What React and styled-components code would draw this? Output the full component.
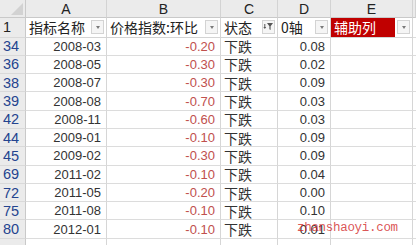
import React from "react";
import styled, { createGlobalStyle, css } from "styled-components";

const Global = createGlobalStyle`
  html, body { margin: 0; padding: 0; background: #fff; }
  body { width: 416px; height: 245px; overflow: hidden; }
`;

const Sheet = styled.div`
  position: relative;
  display: grid;
  grid-template-columns: 26px 81px 114px 57px 53px 82px 1fr;
  grid-auto-rows: 18.3px;
  grid-template-rows: 18px 19.5px;
  width: 416px;
  height: 245px;
  overflow: hidden;
  font-family: "Liberation Sans", "Noto Sans CJK SC", sans-serif;
  background: #fff;
`;

const headerBg = "#ebebeb";

const Corner = styled.div`
  position: relative;
  background: ${headerBg};
  border-right: 1px solid #c9c9c9;
  border-bottom: 1px solid #c9c9c9;
  &::after {
    content: "";
    position: absolute;
    right: 2px;
    bottom: 2px;
    width: 0;
    height: 0;
    border-left: 12px solid transparent;
    border-bottom: 12px solid #d2d2d2;
  }
`;

const ColLetter = styled.div`
  background: ${headerBg};
  border-right: 1px solid #d3d3d3;
  border-bottom: 1px solid #c9c9c9;
  display: flex;
  align-items: center;
  justify-content: center;
  font-size: 14px;
  color: #222;
  box-sizing: border-box;
`;

const RowNum = styled.div`
  background: ${headerBg};
  border-right: 1px solid #c9c9c9;
  border-bottom: 1px solid #d9d9d9;
  display: flex;
  align-items: center;
  padding-left: 3px;
  font-size: 14.5px;
  color: ${(p) => (p.$filtered ? "#24448f" : "#222")};
  box-sizing: border-box;
`;

const HeaderCell = styled.div`
  display: flex;
  align-items: center;
  justify-content: space-between;
  gap: 2px;
  padding: 0 2px 0 3px;
  border-right: 1px solid #d4d4d4;
  border-bottom: 1px solid #d4d4d4;
  font-family: "Noto Sans CJK SC", "Liberation Sans", sans-serif;
  font-size: 14px;
  color: #222;
  white-space: nowrap;
  overflow: hidden;
  box-sizing: border-box;
  ${(p) =>
    p.$accent &&
    css`
      padding-left: 0;
      align-items: stretch;
      & > ${DropButton} {
        align-self: center;
      }
    `}
`;

const AccentLabel = styled.span`
  flex: 1;
  display: flex;
  align-items: center;
  padding-left: 3px;
  background: #c00000;
  color: #fff;
`;

const DropButton = styled.div`
  flex: 0 0 auto;
  width: 13px;
  height: 14px;
  box-sizing: border-box;
  border: 1px solid #d3d3d3;
  background: #f5f5f5;
  display: flex;
  align-items: center;
  justify-content: center;
  &::before {
    content: "";
    width: 0;
    height: 0;
    border-left: 2.5px solid transparent;
    border-right: 2.5px solid transparent;
    border-top: 3px solid #7a7a7a;
  }
`;

const FilterButton = styled.div`
  flex: 0 0 auto;
  width: 13px;
  height: 14px;
  box-sizing: border-box;
  border: 1px solid #d3d3d3;
  background: #f5f5f5;
  display: flex;
  align-items: center;
  justify-content: center;
`;

const Cell = styled.div`
  display: flex;
  align-items: center;
  justify-content: ${(p) => (p.$align === "right" ? "flex-end" : "flex-start")};
  padding: 0 ${(p) => (p.$align === "right" ? "5px" : "3px")};
  border-right: 1px solid #d6d6d6;
  border-bottom: 1px solid #dcdcdc;
  font-size: ${(p) => (p.$cjk ? "14px" : "13px")};
  font-family: ${(p) =>
    p.$cjk
      ? `"Noto Sans CJK SC", "Liberation Sans", sans-serif`
      : `"Liberation Sans", "Noto Sans CJK SC", sans-serif`};
  color: ${(p) => p.$color || "#333"};
  white-space: nowrap;
  box-sizing: border-box;
`;

const Filler = styled.div`
  border-bottom: 1px solid #dcdcdc;
`;

const Watermark = styled.div`
  position: absolute;
  left: 297px;
  top: 221px;
  font-family: "Liberation Mono", monospace;
  font-size: 12.5px;
  color: rgba(210, 40, 40, 0.8);
  letter-spacing: -0.3px;
  pointer-events: none;
`;

const FunnelIcon = () => (
  <svg width="11" height="10" viewBox="0 0 11 10">
    <path d="M4 1 H10 L7.6 4.2 V8 L6.4 7.2 V4.2 Z" fill="#555" />
    <path d="M1.8 2 V6" stroke="#555" strokeWidth="1" />
    <path d="M0.4 5 L1.8 7 L3.2 5 Z" fill="#555" />
  </svg>
);

const rows = [
  ["34", "2008-03", "-0.20", "0.08"],
  ["36", "2008-05", "-0.30", "0.02"],
  ["38", "2008-07", "-0.30", "0.09"],
  ["39", "2008-08", "-0.70", "0.03"],
  ["42", "2008-11", "-0.60", "0.03"],
  ["44", "2009-01", "-0.10", "0.09"],
  ["45", "2009-02", "-0.30", "0.09"],
  ["69", "2011-02", "-0.10", "0.04"],
  ["72", "2011-05", "-0.20", "0.00"],
  ["75", "2011-08", "-0.10", "0.10"],
  ["80", "2012-01", "-0.10", "0.01"],
  ["", "", "", ""],
];

export default function App() {
  return (
    <>
      <Global />
      <Sheet>
        <Corner />
        {["A", "B", "C", "D", "E"].map((l) => (
          <ColLetter key={l}>{l}</ColLetter>
        ))}
        <ColLetter />

        <RowNum>1</RowNum>
        <HeaderCell>
          <span>指标名称</span>
          <DropButton />
        </HeaderCell>
        <HeaderCell>
          <span>价格指数:环比</span>
          <DropButton />
        </HeaderCell>
        <HeaderCell>
          <span>状态</span>
          <FilterButton>
            <FunnelIcon />
          </FilterButton>
        </HeaderCell>
        <HeaderCell>
          <span>0轴</span>
          <DropButton />
        </HeaderCell>
        <HeaderCell $accent>
          <AccentLabel>辅助列</AccentLabel>
          <DropButton />
        </HeaderCell>
        <Filler />

        {rows.map(([n, date, v, d], i) => (
          <React.Fragment key={i}>
            <RowNum $filtered>{n}</RowNum>
            <Cell $align="right">{date}</Cell>
            <Cell $align="right" $color="#c0504d">
              {v}
            </Cell>
            <Cell $cjk>{n ? "下跌" : ""}</Cell>
            <Cell $align="right">{d}</Cell>
            <Cell />
            <Filler />
          </React.Fragment>
        ))}
        <Watermark>zhanshaoyi.com</Watermark>
      </Sheet>
    </>
  );
}
